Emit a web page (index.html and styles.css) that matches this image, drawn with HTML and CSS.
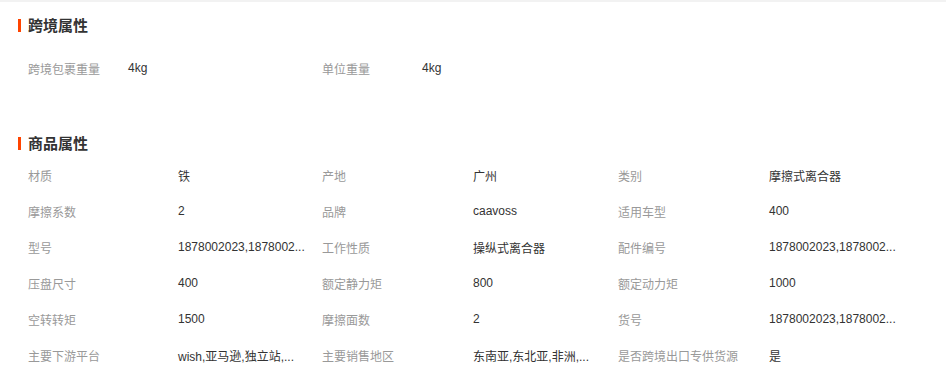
FILE: index.html
```html
<!DOCTYPE html>
<html lang="zh-CN">
<head>
<meta charset="utf-8">
<title>属性</title>
<link rel="stylesheet" href="styles.css">
</head>
<body>
<div class="strip"></div>
<div class="page">
  <section class="sec sec-cross">
    <h2 class="sec-title"><span class="bar"></span>跨境属性</h2>
    <div class="grid grid-cross">
      <div class="cell"><span class="label">跨境包裹重量</span><span class="value">4kg</span></div>
      <div class="cell"><span class="label">单位重量</span><span class="value">4kg</span></div>
    </div>
  </section>
  <section class="sec sec-goods">
    <h2 class="sec-title"><span class="bar"></span>商品属性</h2>
    <div class="grid grid-goods">
      <div class="cell"><span class="label">材质</span><span class="value">铁</span></div>
      <div class="cell"><span class="label">产地</span><span class="value">广州</span></div>
      <div class="cell"><span class="label">类别</span><span class="value">摩擦式离合器</span></div>

      <div class="cell"><span class="label">摩擦系数</span><span class="value">2</span></div>
      <div class="cell"><span class="label">品牌</span><span class="value">caavoss</span></div>
      <div class="cell"><span class="label">适用车型</span><span class="value">400</span></div>

      <div class="cell"><span class="label">型号</span><span class="value">1878002023,1878002...</span></div>
      <div class="cell"><span class="label">工作性质</span><span class="value">操纵式离合器</span></div>
      <div class="cell"><span class="label">配件编号</span><span class="value">1878002023,1878002...</span></div>

      <div class="cell"><span class="label">压盘尺寸</span><span class="value">400</span></div>
      <div class="cell"><span class="label">额定静力矩</span><span class="value">800</span></div>
      <div class="cell"><span class="label">额定动力矩</span><span class="value">1000</span></div>

      <div class="cell"><span class="label">空转转矩</span><span class="value">1500</span></div>
      <div class="cell"><span class="label">摩擦面数</span><span class="value">2</span></div>
      <div class="cell"><span class="label">货号</span><span class="value">1878002023,1878002...</span></div>

      <div class="cell"><span class="label">主要下游平台</span><span class="value">wish,亚马逊,独立站,...</span></div>
      <div class="cell"><span class="label">主要销售地区</span><span class="value">东南亚,东北亚,非洲,...</span></div>
      <div class="cell"><span class="label">是否跨境出口专供货源</span><span class="value">是</span></div>
    </div>
  </section>
</div>
</body>
</html>
```

FILE: styles.css
```css
html, body {
  margin: 0;
  padding: 0;
  background: #fff;
}

body {
  font-family: "Liberation Sans", "Noto Sans CJK SC", sans-serif;
  font-size: 12px;
  color: #333;
}

.strip {
  height: 2px;
  background: #f2f2f2;
}

.page {
  padding: 0 0 0 18px;
}

.sec-title {
  display: flex;
  align-items: center;
  height: 16px;
  margin: 0;
  font-family: "Noto Sans CJK SC", sans-serif;
  font-size: 15px;
  font-weight: bold;
  line-height: 16px;
  color: #333;
}

.bar {
  display: block;
  width: 3px;
  height: 13px;
  background: #ff4400;
  margin-right: 7px;
}

.sec-cross {
  padding-top: 15px;
}

.sec-cross .grid {
  margin-top: 17px;
}

.sec-goods {
  margin-top: 49px;
}

.sec-goods .grid {
  margin-top: 6px;
}

.grid {
  display: grid;
  padding-left: 10px;
  grid-template-columns: 294px 296px 1fr;
  grid-auto-rows: 36px;
}

.cell {
  display: flex;
  align-items: center;
  white-space: nowrap;
  min-width: 0;
}

.label {
  color: #999;
  flex: 0 0 auto;
}

.grid-cross .label {
  width: 100px;
}

.grid-goods .label {
  width: 151px;
}

.grid-goods .cell:nth-child(3n+1) .label {
  width: 150px;
}

.value {
  color: #333;
}
```
